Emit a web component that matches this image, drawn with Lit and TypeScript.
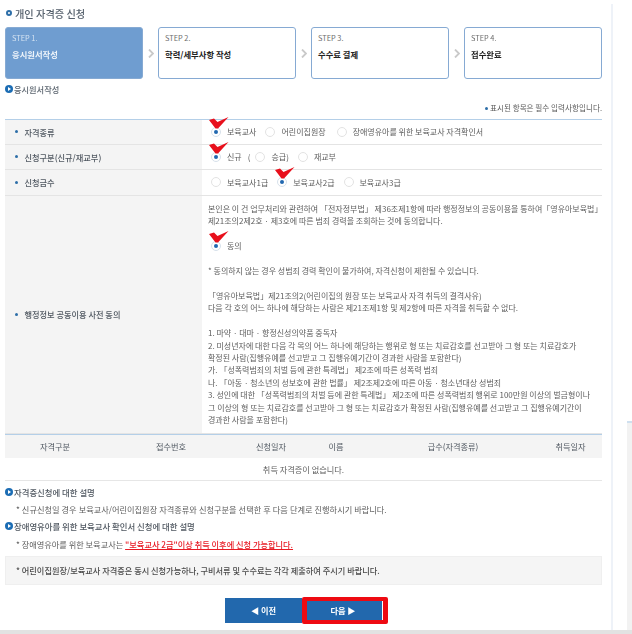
import { LitElement, html, css, svg } from "lit";
import { customElement } from "lit/decorators.js";

const check = svg`<svg class="check" width="20" height="12" viewBox="0 0 20 12"><path d="M0 3 L5 1.5 L8.5 5 L19.5 0 L9 11.5 L6.5 11.5 Z" fill="#e8101c"/></svg>`;

const radio = (on: boolean, checked = false) => html`<span class="radio ${on ? "on" : ""}">${checked ? check : ""}</span>`;

@customElement("app-root")
export class AppRoot extends LitElement {
  static styles = css`
    :host { display: block; width: 632px; height: 634px; overflow: hidden; background: #fff; font-family: "Noto Sans CJK KR", "Noto Sans", sans-serif; font-size: 8px; color: #5d5d5d; }
    .frame { filter: blur(0.3px); }
    .main { display: flex; height: 630px; }
    .panel { width: 611px; box-sizing: border-box; padding: 0 9px 0 5px; flex: none; }
    .rule { width: 2px; margin-top: 4px; background: #eef2f8; flex: none; }
    .side { margin-left: auto; align-self: flex-end; width: 5px; height: 209px; box-sizing: border-box; background: #f2f2f2; border-top: 2px solid #cfe0ef; }
    .bottom { height: 4px; background: #e2e2e2; }
    .title { height: 27px; display: flex; align-items: center; gap: 2px; padding: 0 0 1px 1px; font-size: 10.2px; font-weight: 500; color: #55606c; box-sizing: border-box; }
    .dot { width: 2px; height: 2px; border: 2px solid #2d6ea8; border-radius: 50%; margin-right: 1px; }
    .steps { display: flex; align-items: center; justify-content: space-between; height: 52px; }
    .step { width: 138px; height: 52px; box-sizing: border-box; border: 1px solid #86aad3; border-radius: 3px; padding: 5px 6px; background: #fff; }
    .step.active { background: #6f9dd0; }
    .step small { display: block; font-size: 7.4px; line-height: 9px; color: #6d6d6d; }
    .step.active small { color: #d5e3f2; }
    .step b { display: block; margin-top: 6px; font-size: 8.3px; line-height: 12px; font-weight: 700; color: #222; }
    .step.active b { color: #eef4fa; }
    .arrow { width: 6px; height: 9px; }
    .sub { display: flex; align-items: center; height: 20px; font-size: 8.2px; color: #5d6670; font-weight: 500; }
    .sdot { width: 8px; height: 8px; border-radius: 50%; background: #1c6db4; display: inline-flex; align-items: center; justify-content: center; flex: none; margin-right: 1px; }
    .sdot::after { content: ""; border-left: 3px solid #fff; border-top: 2px solid transparent; border-bottom: 2px solid transparent; }
    .req { text-align: right; font-size: 7.6px; line-height: 10px; height: 16px; margin-top: 4px; }
    .req i { display: inline-block; width: 3px; height: 3px; border-radius: 50%; background: #2d6ea8; margin-right: 2px; vertical-align: 1px; }
    .form { border-top: 1px solid #b4cfe8; }
    .row { display: grid; grid-template-columns: 197px 1fr; border-bottom: 1px solid #e4e4e4; }
    .row.h { height: 25.5px; box-sizing: border-box; }
    .row.h:first-child { height: 24.5px; }
    .label { background: #f4f4f4; display: flex; align-items: center; padding-left: 9.5px; gap: 7px; font-weight: 500; color: #4f5760; font-size: 8.2px; }
    .label i { width: 3px; height: 3px; border-radius: 50%; background: #2d6ea8; flex: none; }
    .cell { display: flex; align-items: center; padding-left: 9px; gap: 6px; white-space: nowrap; }
    .radio { position: relative; width: 10px; height: 10px; box-sizing: border-box; border-radius: 50%; border: 1px solid #e2e2e2; background: #fff; flex: none; display: inline-block; }
    .radio.on { border-color: #d6e0ea; }
    .radio.on::after { content: ""; position: absolute; left: 2px; top: 2px; width: 4px; height: 4px; border-radius: 50%; background: #2268b0; }
    .check { position: absolute; left: -3px; top: -11px; }
    .g { margin-right: 3px; }
    .g3 { margin-right: 5px; }
    .paren { margin-right: -1px; }
    .consent { padding: 7.3px 0 0 6px; line-height: 12.45px; height: 237px; box-sizing: border-box; }
    .consent p { margin: 0; white-space: nowrap; }
    .agree { display: flex; align-items: center; gap: 6px; height: 12.4px; margin: 11.9px 0 12.9px; padding-left: 3px; }
    .blank { height: 12.45px; }
    .hist { display: grid; grid-template-columns: 100px 132px 68px 62px 172px 63px; box-sizing: border-box; border-top: 1px solid #b4cfe8; background: #f4f4f4; height: 24px; align-items: center; text-align: center; color: #4f5760; font-size: 8.2px; }
    .none { height: 23px; box-sizing: border-box; display: flex; align-items: center; justify-content: center; border-bottom: 1px solid #e6e6e6; font-size: 8.2px; }
    .sub2 { display: flex; align-items: center; height: 17px; color: #4f5760; font-weight: 500; font-size: 8.4px; margin-top: 3px; }
    .sub2.tight { margin-top: 0; }
    .note { height: 17px; display: flex; align-items: center; padding-left: 11px; font-size: 8.2px; white-space: pre; }
    .note.wide { word-spacing: 0.2px; }
    .note.low { margin-top: 1px; }
    .note u { color: #e81b24; font-weight: 500; text-decoration: underline; }
    .notice { margin-top: 3px; height: 29px; background: #f5f5f5; border: 1px solid #efefef; display: flex; align-items: center; padding-left: 10px; box-sizing: border-box; color: #4a4a4a; font-weight: 500; font-size: 8.2px; }
    .btns { display: flex; align-items: center; padding-left: 220px; margin-top: 12px; }
    .btn { width: 77px; height: 24.5px; background: #2268ad; color: #fff; font-weight: 700; font-size: 8.2px; display: flex; align-items: center; justify-content: center; gap: 2px; }
    .btn.next { width: 86px; height: 27.5px; box-sizing: border-box; border: 4px solid #ee0a12; border-width: 4px 5px; border-radius: 2px; box-shadow: inset -1px 0 #fff; padding-right: 4px; }
  `;

  render() {
    const arrow = svg`<svg class="arrow" viewBox="0 0 6 9"><path d="M1 0.5 L5 4.5 L1 8.5" fill="none" stroke="#c9c9c9" stroke-width="1.8"/></svg>`;
    return html`<div class="frame">
      <div class="main">
      <div class="panel">
        <div class="title"><span class="dot"></span>개인 자격증 신청</div>
        <div class="steps">
          <div class="step active"><small>STEP 1.</small><b>응시원서작성</b></div>${arrow}
          <div class="step"><small>STEP 2.</small><b>학력/세부사항 작성</b></div>${arrow}
          <div class="step"><small>STEP 3.</small><b>수수료 결제</b></div>${arrow}
          <div class="step"><small>STEP 4.</small><b>접수완료</b></div>
        </div>
        <div class="sub"><span class="sdot"></span>응시원서작성</div>
        <div class="req"><i></i>표시된 항목은 필수 입력사항입니다.</div>
        <div class="form">
          <div class="row h"><div class="label"><i></i>자격종류</div><div class="cell">${radio(true, true)}<span class="g">보육교사</span>${radio(false)}<span class="g3">어린이집원장</span>${radio(false)}<span>장애영유아를 위한 보육교사 자격확인서</span></div></div>
          <div class="row h"><div class="label"><i></i>신청구분(신규/재교부)</div><div class="cell">${radio(true, true)}<span>신규</span><span class="paren">(</span>${radio(false)}<span class="g">승급)</span>${radio(false)}<span>재교부</span></div></div>
          <div class="row h"><div class="label"><i></i>신청급수</div><div class="cell">${radio(false)}<span class="g">보육교사1급</span>${radio(true, true)}<span class="g">보육교사2급</span>${radio(false)}<span>보육교사3급</span></div></div>
          <div class="row"><div class="label"><i></i>행정정보 공동이용 사전 동의</div><div class="consent">
            <p>본인은 이 건 업무처리와 관련하여 「전자정부법」 제36조제1항에 따라 행정정보의 공동이용을 통하여「영유아보육법」<br>제21조의2제2호 · 제3호에 따른 범죄 경력을 조회하는 것에 동의합니다.</p>
            <div class="agree">${radio(true, true)}<span>동의</span></div>
            <p>* 동의하지 않는 경우 성범죄 경력 확인이 불가하여, 자격신청이 제한될 수 있습니다.</p>
            <div class="blank"></div>
            <p>「영유아보육법」제21조의2(어린이집의 원장 또는 보육교사 자격 취득의 결격사유)<br>다음 각 호의 어느 하나에 해당하는 사람은 제21조제1항 및 제2항에 따른 자격을 취득할 수 없다.</p>
            <div class="blank"></div>
            <p>1. 마약 · 대마 · 향정신성의약품 중독자<br>2. 미성년자에 대한 다음 각 목의 어느 하나에 해당하는 행위로 형 또는 치료감호를 선고받아 그 형 또는 치료감호가<br>확정된 사람(집행유예를 선고받고 그 집행유예기간이 경과한 사람을 포함한다)<br>가. 「성폭력범죄의 처벌 등에 관한 특례법」 제2조에 따른 성폭력 범죄<br>나. 「아동 · 청소년의 성보호에 관한 법률」 제2조제2호에 따른 아동 · 청소년대상 성범죄<br>3. 성인에 대한 「성폭력범죄의 처벌 등에 관한 특례법」 제2조에 따른 성폭력범죄 행위로 100만원 이상의 벌금형이나<br>그 이상의 형 또는 치료감호를 선고받아 그 형 또는 치료감호가 확정된 사람(집행유예를 선고받고 그 집행유예기간이<br>경과한 사람을 포함한다)</p>
          </div></div>
        </div>
        <div class="hist"><span>자격구분</span><span>접수번호</span><span>신청일자</span><span>이름</span><span>급수(자격종류)</span><span>취득일자</span></div>
        <div class="none">취득 자격증이 없습니다.</div>
        <div class="sub2"><span class="sdot"></span>자격증신청에 대한 설명</div>
        <div class="note wide">* 신규신청일 경우 보육교사/어린이집원장 자격종류와 신청구분을 선택한 후 다음 단계로 진행하시기 바랍니다.</div>
        <div class="sub2 tight"><span class="sdot"></span>장애영유아를 위한 보육교사 확인서 신청에 대한 설명</div>
        <div class="note low">* 장애영유아를 위한 보육교사는 <u>"보육교사 2급"이상 취득 이후에 신청 가능합니다.</u></div>
        <div class="notice">* 어린이집원장/보육교사 자격증은 동시 신청가능하나, 구비서류 및 수수료는 각각 제출하여 주시기 바랍니다.</div>
        <div class="btns"><div class="btn">◀ 이전</div><div class="btn next">다음 ▶</div></div>
      </div>
      <div class="rule"></div>
      <div class="side"></div>
      </div>
      <div class="bottom"></div>
    </div>`;
  }
}
